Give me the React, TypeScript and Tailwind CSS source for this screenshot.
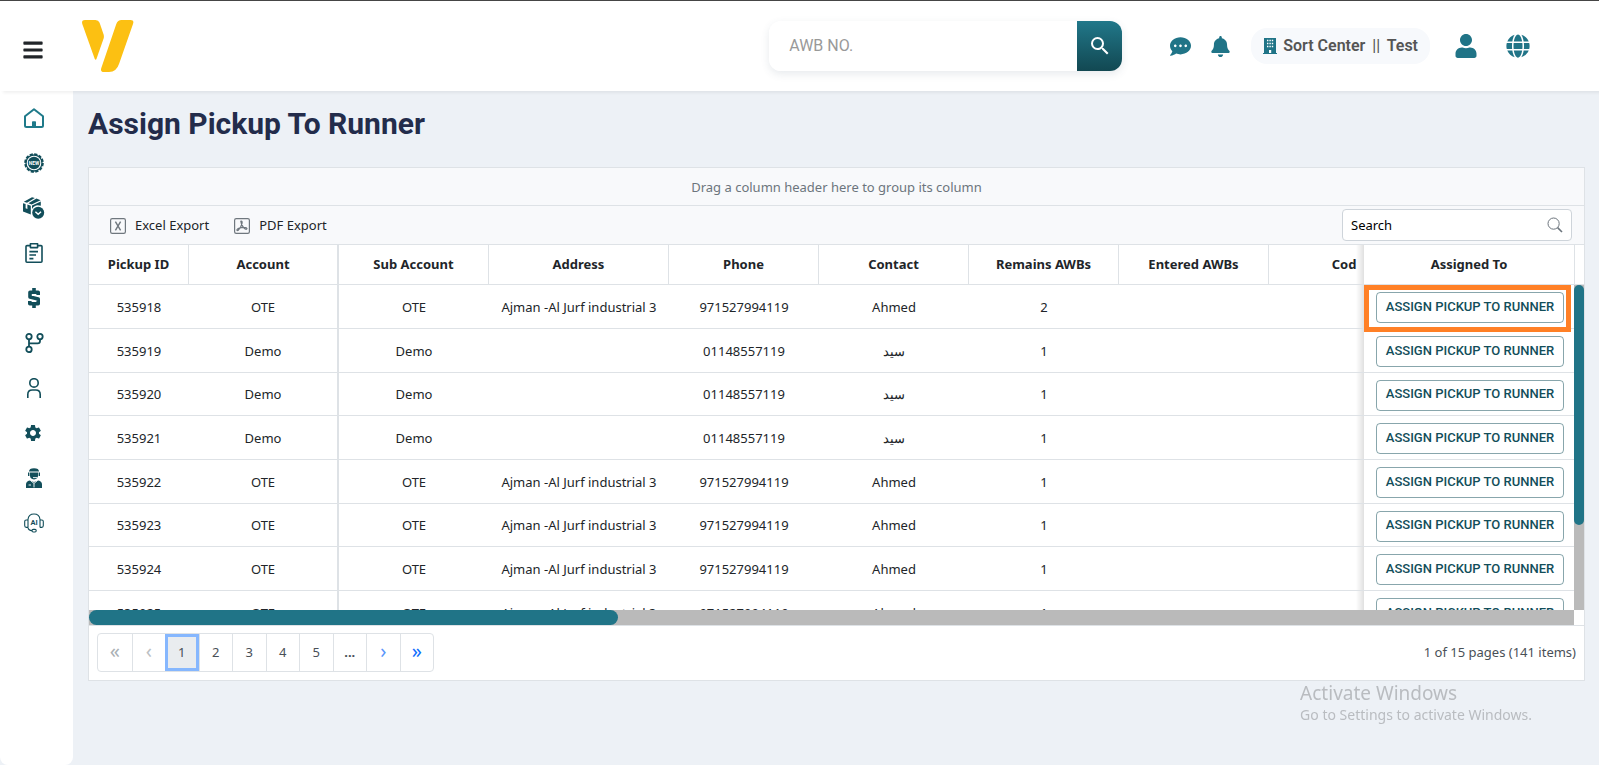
import { useState } from 'react'
import type { ReactNode } from 'react'
import { FaBars, FaBell, FaCommentDots, FaGlobe, FaUser } from 'react-icons/fa'
import { MdSearch, MdSettings } from 'react-icons/md'
import { clsx } from 'clsx'

interface Pickup {
  id: number
  account: string
  address: string
  phone: string
  contact: string
  remains: number
}

const ote = { account: 'OTE', address: 'Ajman -Al Jurf industrial 3', phone: '971527994119', contact: 'Ahmed' }
const demo = { account: 'Demo', address: '', phone: '01148557119', contact: 'سيد' }

const pickups: Pickup[] = [
  { id: 535918, ...ote, remains: 2 },
  { id: 535919, ...demo, remains: 1 },
  { id: 535920, ...demo, remains: 1 },
  { id: 535921, ...demo, remains: 1 },
  { id: 535922, ...ote, remains: 1 },
  { id: 535923, ...ote, remains: 1 },
  { id: 535924, ...ote, remains: 1 },
  { id: 535925, ...ote, remains: 1 },
]

const columns = [
  { title: 'Pickup ID', col: 'w-[100px]', head: 'border-r' },
  { title: 'Account', col: 'w-[150px]', head: 'border-r-2' },
  { title: 'Sub Account', col: 'w-[150px]', head: 'border-r' },
  { title: 'Address', col: 'w-[180px]', head: 'border-r' },
  { title: 'Phone', col: 'w-[150px]', head: 'border-r' },
  { title: 'Contact', col: 'w-[150px]', head: 'border-r' },
  { title: 'Remains AWBs', col: 'w-[150px]', head: 'border-r' },
  { title: 'Entered AWBs', col: 'w-[150px]', head: 'border-r' },
  { title: 'Cod', col: 'w-[150px]', head: '' },
]

// frozen right column with a soft edge over the cells that scroll below it
const frozen =
  'sticky right-0 bg-white before:absolute before:inset-y-0 before:right-full before:w-2 before:bg-linear-to-l before:from-black/12 before:to-transparent'

function Logo() {
  return (
    <svg viewBox="0 0 52 52" className="size-13" fill="#fcc012" aria-hidden="true">
      <path d="M3 0H13.5Q16.5 0 17.6 2.8L21.6 14.5Q22.2 16.8 21.6 18.6L14.6 38.5Q13.6 41 12.6 38.5L.3 4Q-.8 0 3 0Z" />
      <path d="M39.5 0H48.5Q52.4 0 51 4L37.2 43.5Q34.5 52 27 52H22Q18 52 19.3 48L34.2 4.2Q35.8 0 39.5 0Z" />
    </svg>
  )
}

function BuildingIcon() {
  return (
    <svg viewBox="0 0 14 16" className="mr-[6px] h-4 w-[14px]" fill="#207487">
      <path d="M1 0H13V15H14V16H0V15H1Z" />
      <path d="M4 2.5H5.4M6.4 2.5H7.8M8.8 2.5H10.2M4 5.5H5.4M6.4 5.5H7.8M8.8 5.5H10.2M4 8.5H5.4M6.4 8.5H7.8M8.8 8.5H10.2" stroke="#fff" strokeWidth="1.6" />
      <path d="M6 12H8.2V15H6Z" fill="#fff" />
    </svg>
  )
}

function HomeIcon() {
  return (
    <svg viewBox="0 0 20 20" className="size-5" fill="none" stroke="#1f7a8a" strokeWidth="2" strokeLinejoin="round">
      <path d="M1 8.2 10 1.2 19 8.2V17.5Q19 19 17.5 19H2.5Q1 19 1 17.5Z" />
      <path d="M8 19V14Q8 13.2 8.8 13.2H11.2Q12 13.2 12 14V19Z" fill="#1f7a8a" stroke="none" />
    </svg>
  )
}

function NewIcon() {
  return (
    <svg viewBox="0 0 20 20" className="size-5">
      <circle cx="10" cy="10" r="8.8" fill="none" stroke="#124e5a" strokeWidth="2" strokeDasharray="3.2 1.4" />
      <circle cx="10" cy="10" r="8" fill="none" stroke="#124e5a" strokeWidth="1.3" />
      <circle cx="10" cy="10" r="6.2" fill="#124e5a" />
      <text x="10" y="11.8" textAnchor="middle" fontSize="4.8" fontWeight="700" fontFamily="Roboto, sans-serif" fill="#fff">NEW</text>
    </svg>
  )
}

function PackageIcon() {
  return (
    <svg viewBox="0 0 22 22" className="size-[22px]" fill="#124e5a">
      <path d="M.8 4.8 9 .2 11.8 1 4 5.8Z" />
      <path d="M5.4 6.3 13.4 1.6 17.6 3.2 8.6 7.4Z" />
      <path d="M0 6.2 2.6 7V11.2L4.4 12V7.6L7.8 8.8V17.6L0 14.6Z" />
      <path d="M9 8.6 17.8 4.6V8.8A7.4 7.4 0 0 0 9 12Z" />
      <circle cx="15.2" cy="15.8" r="6" />
      <path d="M12.4 14.8 15.2 17.2 18 14.8" fill="none" stroke="#fff" strokeWidth="1.5" />
    </svg>
  )
}

function ClipboardIcon() {
  return (
    <svg viewBox="0 0 18 20" className="h-5 w-[18px]" fill="none" stroke="#124e5a" strokeWidth="1.6" strokeLinejoin="round">
      <path d="M5.4 2.6H2Q1 2.6 1 3.6V18.2Q1 19.2 2 19.2H16Q17 19.2 17 18.2V3.6Q17 2.6 16 2.6H12.6" />
      <path d="M5.4.8H12.6V4.6H5.4Z" />
      <path d="M4.4 8.6H13M4.4 12H11M4.4 15.6H8.4" />
    </svg>
  )
}

function DollarIcon() {
  return (
    <svg viewBox="0 0 12 20" className="h-5 w-3" fill="none" stroke="#124e5a">
      <path d="M10.2 7V4.2H2V9L10.2 11V15.8H1.8V13" strokeWidth="3.6" strokeLinejoin="round" />
      <path d="M6 0V4M6 16V20" strokeWidth="3.6" />
    </svg>
  )
}

function BranchIcon() {
  return (
    <svg viewBox="0 0 19 20" className="h-5 w-[19px]" fill="none" stroke="#124e5a" strokeWidth="1.8">
      <circle cx="4" cy="3.6" r="2.7" />
      <circle cx="15" cy="3.6" r="2.7" />
      <circle cx="4" cy="16.4" r="2.7" />
      <path d="M4 6.3V13.7M15 6.3V8Q15 10.4 12.6 10.4H4" />
    </svg>
  )
}

function PersonIcon() {
  return (
    <svg viewBox="0 0 16 20" className="h-5 w-4" fill="none" stroke="#124e5a" strokeWidth="1.6">
      <circle cx="8" cy="4.9" r="4.2" />
      <path d="M1.8 20V16.4Q1.8 12 6.2 12H9.8Q14.2 12 14.2 16.4V20" />
    </svg>
  )
}

function RunnerIcon() {
  return (
    <svg viewBox="0 0 18 20" className="h-5 w-[18px]" fill="#124e5a">
      <path d="M4 3.6Q4 .2 9 .2T14 3.6Z" />
      <path d="M3 4.4H4.4V8H3ZM13.6 4.4H15V8H13.6Z" />
      <path d="M5 4.6H13V7.6Q13 11.4 9 11.4T5 7.6Z" />
      <path d="M1 20V16.4Q1 13.2 4.6 12.4L9 14 13.4 12.4Q17 13.2 17 16.4V20Z" />
      <path d="M8 9.6H12.6M5.6 12.6 9 15.4 12.4 12.6M9 15.4V19.4M3.6 17H6" stroke="#fff" strokeWidth=".9" fill="none" />
    </svg>
  )
}

function AiIcon() {
  return (
    <svg viewBox="0 0 20 20" className="size-5" fill="none" stroke="#124e5a" strokeWidth="1.1">
      <path d="M4 14.6V6.4Q4.6 1 10 1T16 6.4V14.6" />
      <path d="M4 7H2.2Q.7 7 .7 8.5V12.6Q.7 14.4 2.2 14.4H4M16 7H17.8Q19.3 7 19.3 8.5V12.6Q19.3 14.4 17.8 14.4H16" />
      <path d="M4 14.6Q4.4 17.4 8 17.6" />
      <rect x="8" y="16.4" width="4.2" height="2.6" rx="1.2" />
      <text x="10" y="12.2" textAnchor="middle" fontSize="7.5" fontWeight="700" fontFamily="Roboto, sans-serif" fill="#124e5a" stroke="none">AI</text>
    </svg>
  )
}

const menu: { label: string; icon: ReactNode }[] = [
  { label: 'Home', icon: <HomeIcon /> },
  { label: 'New', icon: <NewIcon /> },
  { label: 'Shipments', icon: <PackageIcon /> },
  { label: 'Reports', icon: <ClipboardIcon /> },
  { label: 'Finance', icon: <DollarIcon /> },
  { label: 'Branches', icon: <BranchIcon /> },
  { label: 'Users', icon: <PersonIcon /> },
  { label: 'Settings', icon: <MdSettings className="size-5 mr-[3px] text-[#124e5a]" /> },
  { label: 'Runners', icon: <RunnerIcon /> },
  { label: 'AI Support', icon: <AiIcon /> },
]

function ExcelIcon() {
  return (
    <svg viewBox="0 0 16 16" className="size-4" fill="none" stroke="#6f777e">
      <rect x=".6" y=".6" width="14.8" height="14.8" rx="1.6" strokeWidth="1.2" />
      <path d="M5.4 3.6 10.6 12.4M10.6 3.6 5.4 12.4" strokeWidth="1.4" />
    </svg>
  )
}

function PdfIcon() {
  return (
    <svg viewBox="0 0 16 16" className="size-4" fill="none" stroke="#6f777e">
      <rect x=".6" y=".6" width="14.8" height="14.8" rx="1.6" strokeWidth="1.2" />
      <path d="M6.8 3.2Q8.6 2.6 8 5.4 7.2 9 4.4 12.2 2.6 13.2 3 11.6 4.4 9.8 9.6 9.4 13 9.6 13 10.8 12.2 12.2 9.6 9.6 7 6.6 6.8 3.2Z" strokeWidth="1.2" />
    </svg>
  )
}

function Header() {
  return (
    <header className="relative z-20 flex h-[91px] shrink-0 items-center border-t border-[#454545] bg-white pl-[22px] pr-[69px] shadow-[3px_2px_3px_rgba(0,0,0,0.06)]">
      <button aria-label="Toggle menu" className="mt-2 text-[#212529]">
        <FaBars className="size-[22px]" />
      </button>
      <a href="#" aria-label="Dashboard" className="ml-[38px]">
        <Logo />
      </a>
      <form className="ml-auto flex h-[50px] w-[353px] rounded-xl shadow-[0_3px_8px_rgba(60,80,110,0.12)]" onSubmit={e => e.preventDefault()}>
        <input
          type="text"
          aria-label="AWB number"
          placeholder="AWB NO."
          className="min-w-0 flex-1 rounded-l-xl bg-white px-5 text-base placeholder:text-[#999]"
        />
        <button aria-label="Find AWB" className="flex w-[45px] items-center justify-center rounded-r-xl bg-linear-to-b from-[#21788a] to-[#124852] text-white">
          <MdSearch className="size-6" />
        </button>
      </form>
      <div className="ml-12 flex items-center text-[#207487]">
        <button aria-label="Messages"><FaCommentDots className="size-[21px]" /></button>
        <button aria-label="Notifications" className="ml-[19px]"><FaBell className="size-[21px]" /></button>
        <div className="ml-5 flex h-9 items-center rounded-2xl bg-[#f7f9fc] px-3 font-semibold text-[#555]">
          <BuildingIcon />
          <span>Sort Center <span className="mx-[3px] font-normal">||</span> Test</span>
        </div>
        <button aria-label="Profile" className="ml-6"><FaUser className="size-6" /></button>
        <button aria-label="Language" className="ml-7"><FaGlobe className="size-6" /></button>
      </div>
    </header>
  )
}

function Pager() {
  const [page, setPage] = useState('1')
  const cell = 'border-l border-[#dee2e6] first:border-l-0'

  return (
    <div className="flex items-center justify-between border-t border-[#dee2e6] px-2 pt-[7px] pb-2">
      <nav aria-label="Pages" className="grid h-[39px] w-[337px] grid-cols-10 rounded border border-[#dee2e6] text-[#495057]">
        <button disabled aria-label="First page" className={clsx(cell, 'pb-1 text-xl text-[#aaafb4]')}>«</button>
        <button disabled aria-label="Previous page" className={clsx(cell, 'pb-1 text-xl text-[#bcc0c4]')}>‹</button>
        {['1', '2', '3', '4', '5'].map(n => (
          <button
            key={n}
            onClick={() => setPage(n)}
            className={n === page ? 'border-3 border-[#86b7fe] bg-[#e9ecef]' : cell}
          >
            {n}
          </button>
        ))}
        <button aria-label="More pages" className={clsx(cell, 'font-bold')}>...</button>
        <button aria-label="Next page" className={clsx(cell, 'pb-1 text-xl text-[#5a96fb]')}>›</button>
        <button aria-label="Last page" className={clsx(cell, 'pb-1 text-xl text-[#0d6efd]')}>»</button>
      </nav>
      <p className="text-[#495057]">1 of 15 pages (141 items)</p>
    </div>
  )
}

function PickupGrid() {
  return (
    <section className="mt-[23px] border border-[#dee2e6] bg-white font-['Noto_Sans',sans-serif] text-[13px] text-[#212529]">
      <p className="flex h-[38px] items-center justify-center border-b border-[#dee2e6] bg-[#f8f9fb] pt-[2px] text-[#6c757d]">
        Drag a column header here to group its column
      </p>

      <div className="flex h-[39px] items-center gap-[25px] border-b border-[#dee2e6] bg-[#f8f9fb] pl-[21px] pr-3">
        <button className="flex items-center gap-[9px] pt-[2px]"><ExcelIcon />Excel Export</button>
        <button className="flex items-center gap-[9px] pt-[2px]"><PdfIcon />PDF Export</button>
        <label className="ml-auto flex h-8 w-[230px] items-center rounded border border-[#ced4da] bg-white px-2">
          <input type="text" aria-label="Search pickups" placeholder="Search" className="min-w-0 flex-1 pt-[2px] placeholder:text-black" />
          <svg viewBox="0 0 16 16" className="size-4" fill="none" stroke="#6c757d">
            <circle cx="6.6" cy="6.6" r="5.6" />
            <path d="M10.6 10.6 15 15" strokeWidth="1.6" />
          </svg>
        </label>
      </div>

      <div className="flex">
        <div className="relative h-[365px] min-w-0 flex-1 overflow-hidden">
          <table className="w-[1540px] min-w-full table-fixed border-separate border-spacing-0 text-center">
            <colgroup>
              {columns.map(c => <col key={c.title} className={c.col} />)}
              <col className="w-[210px]" />
            </colgroup>
            <thead>
              <tr className="h-10">
                {columns.map(c => (
                  <th key={c.title} scope="col" className={clsx('border-b border-[#dee2e6] font-bold', c.head)}>{c.title}</th>
                ))}
                <th scope="col" className={clsx(frozen, 'border-b border-[#dee2e6] font-bold')}>Assigned To</th>
              </tr>
            </thead>
            <tbody>
              {pickups.map((p, i) => (
                <tr key={p.id} className="h-11 nth-[3n]:h-[43px] *:border-b *:border-[#dee2e6] *:pt-[2px] *:pb-0">
                  <td>{p.id}</td>
                  <td className="border-r-2">{p.account}</td>
                  <td>{p.account}</td>
                  <td className="whitespace-nowrap">{p.address}</td>
                  <td>{p.phone}</td>
                  <td>{p.contact}</td>
                  <td>{p.remains}</td>
                  <td />
                  <td />
                  <td className={clsx(frozen, 'pl-[2px]', i === 0 && 'z-10')}>
                    <button className="h-[31px] w-[188px] rounded border border-[#124e5a]/50 pb-[2px] font-[Roboto,sans-serif] font-medium text-[#124e5a]">
                      ASSIGN PICKUP TO RUNNER
                    </button>
                    {i === 0 && <span className="pointer-events-none absolute -bottom-1 left-0 right-[3px] top-0 border-5 border-[#ff8026]" />}
                  </td>
                </tr>
              ))}
            </tbody>
          </table>
        </div>
        {/* vertical scrollbar */}
        <div className="z-10 flex w-[10px] flex-col bg-[#bababa]">
          <div className="h-10 border-b border-l border-[#dee2e6] bg-white" />
          <div className="h-60 rounded-full bg-[#207487]" />
        </div>
      </div>
      {/* horizontal scrollbar */}
      <div className="mr-[10px] h-[15px] bg-[#bababa]">
        <div className="h-full w-[35.6%] rounded-full bg-[#207487]" />
      </div>

      <Pager />
    </section>
  )
}

export default function App() {
  return (
    <div className="flex h-screen flex-col bg-[#edf1f6] font-[Roboto,sans-serif]">
      <Header />
      <div className="flex min-h-0 flex-1">
        <aside className="w-[73px] shrink-0 rounded-b-lg bg-white pt-1">
          <nav aria-label="Main" className="flex flex-col">
            {menu.map(m => (
              <a key={m.label} href="#" aria-label={m.label} className="flex h-[45px] items-center justify-center pr-[5px]">
                {m.icon}
              </a>
            ))}
          </nav>
        </aside>
        <main className="min-w-0 flex-1 overflow-hidden pl-[15px] pr-[14px] pt-[13px]">
          <h1 className="text-3xl leading-10 font-bold text-[#232c4b]">Assign Pickup To Runner</h1>
          <PickupGrid />
        </main>
      </div>
      <div className="pointer-events-none fixed bottom-10 right-[67px] font-['Noto_Sans',sans-serif] text-[#b9bcc0]">
        <p className="text-[19px] leading-6">Activate Windows</p>
        <p className="text-sm leading-5">Go to Settings to activate Windows.</p>
      </div>
    </div>
  )
}
